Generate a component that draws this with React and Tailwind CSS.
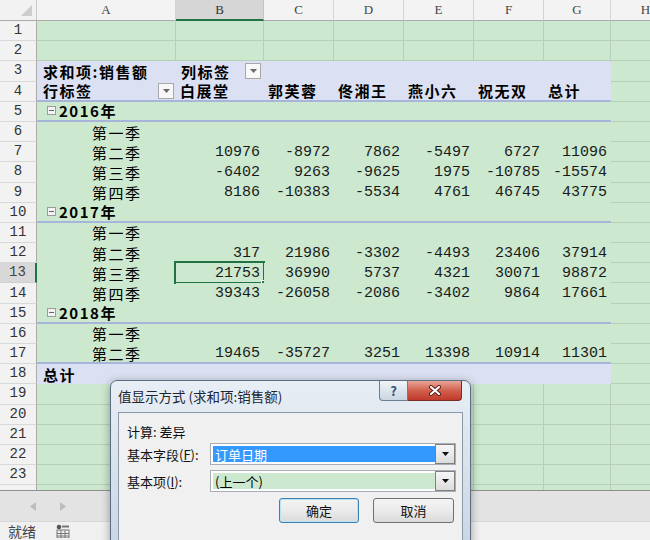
import React from 'react';

const W = ['w-[139px]', 'w-[88px]', 'w-[70px]', 'w-[70px]', 'w-[70px]', 'w-[70px]', 'w-[67px]', 'w-[70px]'];
const LETTERS = ['A', 'B', 'C', 'D', 'E', 'F', 'G', 'H'];
const GRIDCELL = 'shrink-0 h-full border-r border-b border-r-[#b6cfb8] border-b-[#b6cfb8] bg-[#cce8cf]';
const NAMES = ['白展堂', '郭芙蓉', '佟湘王', '燕小六', '祝无双', '总计'];

const rows = [
  { n: 1, kind: 'plain' },
  { n: 2, kind: 'plain' },
  { n: 3, kind: 'hdr3' },
  { n: 4, kind: 'hdr4' },
  { n: 5, kind: 'year', t: '2016年' },
  { n: 6, kind: 'q', t: '第一季' },
  { n: 7, kind: 'q', t: '第二季', v: [10976, -8972, 7862, -5497, 6727, 11096] },
  { n: 8, kind: 'q', t: '第三季', v: [-6402, 9263, -9625, 1975, -10785, -15574] },
  { n: 9, kind: 'q', t: '第四季', v: [8186, -10383, -5534, 4761, 46745, 43775] },
  { n: 10, kind: 'year', t: '2017年' },
  { n: 11, kind: 'q', t: '第一季' },
  { n: 12, kind: 'q', t: '第二季', v: [317, 21986, -3302, -4493, 23406, 37914] },
  { n: 13, kind: 'q', t: '第三季', v: [21753, 36990, 5737, 4321, 30071, 98872] },
  { n: 14, kind: 'q', t: '第四季', v: [39343, -26058, -2086, -3402, 9864, 17661] },
  { n: 15, kind: 'year', t: '2018年' },
  { n: 16, kind: 'q', t: '第一季' },
  { n: 17, kind: 'q', t: '第二季', v: [19465, -35727, 3251, 13398, 10914, 11301], line: true },
  { n: 18, kind: 'total' },
  { n: 19, kind: 'plain' },
  { n: 20, kind: 'plain' },
  { n: 21, kind: 'plain' },
  { n: 22, kind: 'plain' },
  { n: 23, kind: 'plain' },
];

function RowHead({ n, sel }) {
  return (
    <div
      className={
        sel
          ? "w-[37px] shrink-0 h-full flex items-center justify-center bg-[#d8d8d8] border-b border-b-[#cfcfcf] border-r-2 border-r-[#217346] text-[#444] font-['Liberation_Mono',monospace] text-[14px]"
          : "w-[37px] shrink-0 h-full flex items-center justify-center bg-[#f2f2f2] border-b border-b-[#d8d8d8] border-r border-r-[#ababab] text-[#333] font-['Liberation_Mono',monospace] text-[14px]"
      }
    >
      {n}
    </div>
  );
}

function FilterBtn() {
  return (
    <span className="w-[16px] h-[16px] shrink-0 border border-[#a8a8a8] bg-[#f8f8f8] flex items-center justify-center">
      <svg width="7" height="4" viewBox="0 0 7 4">
        <polygon points="0,0 7,0 3.5,4" fill="#6a6a6a" />
      </svg>
    </span>
  );
}

function CollapseBox() {
  return (
    <span className="w-[9px] h-[9px] shrink-0 border border-[#9c9c9c] bg-[#f3f3f3] flex items-center justify-center">
      <span className="w-[5px] h-[1px] bg-[#666]" />
    </span>
  );
}

function PivotRow({ r }) {
  const lav = r.kind === 'hdr3' || r.kind === 'hdr4' || r.kind === 'total';
  const line = r.kind === 'hdr4' || r.kind === 'year' || r.line;
  const base = lav ? 'shrink-0 h-full bg-[#dbe0f2]' : 'shrink-0 h-full bg-[#cce8cf]';
  const lineCls = line ? ' border-b-2 border-b-[#a7b5da]' : '';

  let a;
  if (r.kind === 'hdr3') a = <span className="pl-[6px] font-bold">求和项:销售额</span>;
  else if (r.kind === 'hdr4')
    a = (
      <div className="flex w-full items-center justify-between pl-[6px] pr-[2px]">
        <span className="font-bold">行标签</span>
        <FilterBtn />
      </div>
    );
  else if (r.kind === 'year')
    a = (
      <div className="flex items-center pl-[10px] gap-[3px]">
        <CollapseBox />
        <span className="font-bold">{r.t}</span>
      </div>
    );
  else if (r.kind === 'q') a = <span className="pl-[55px]">{r.t}</span>;
  else a = <span className="pl-[6px] font-bold">总计</span>;

  return (
    <>
      <div className={`${W[0]} ${base}${lineCls} flex items-center text-[15px] tracking-[1.5px] leading-none`}>{a}</div>
      {[0, 1, 2, 3, 4, 5].map((i) => {
        let content = null;
        if (r.kind === 'hdr3' && i === 0)
          content = (
            <div className="flex w-full items-center justify-between pl-[5px] pr-[3px]">
              <span className="font-bold text-[15px] tracking-[1.5px]">列标签</span>
              <FilterBtn />
            </div>
          );
        else if (r.kind === 'hdr4')
          content = <span className="pl-[4px] font-bold text-[15px] tracking-[1.5px]">{NAMES[i]}</span>;
        else if (r.v)
          content = (
            <span className="w-full text-right pr-[4px] font-['Liberation_Mono',monospace] text-[15px] text-[#1a1a1a]">
              {r.v[i]}
            </span>
          );
        const selCell = r.n === 13 && i === 0;
        return (
          <div key={i} className={`${W[i + 1]} ${base}${lineCls} flex items-center leading-none relative`}>
            {content}
            {selCell && (
              <>
                <div className="absolute -left-[2px] -top-[2px] -right-[1px] -bottom-[1px] border-2 border-[#217346]" />
                <div className="absolute -right-[3px] -bottom-[3px] w-[6px] h-[6px] bg-[#217346] border border-white" />
              </>
            )}
          </div>
        );
      })}
      <div className={`${W[7]} ${GRIDCELL}`} />
    </>
  );
}

function SheetRow({ r }) {
  return (
    <div className="flex h-[20.2px] shrink-0">
      <RowHead n={r.n} sel={r.n === 13} />
      {r.kind === 'plain' ? W.map((w, i) => <div key={i} className={`${w} ${GRIDCELL}`} />) : <PivotRow r={r} />}
    </div>
  );
}

function HeaderRow() {
  return (
    <div className="flex h-[21px] shrink-0">
      <div className="w-[37px] shrink-0 h-full bg-[#f2f2f2] border-r border-b border-r-[#c8c8c8] border-b-[#ababab] flex items-end justify-end pr-[4px] pb-[4px]">
        <svg width="11" height="11" viewBox="0 0 11 11">
          <polygon points="11,0 11,11 0,11" fill="#cdcdcd" />
        </svg>
      </div>
      {LETTERS.map((l, i) => (
        <div
          key={l}
          className={
            i === 1
              ? `${W[i]} shrink-0 h-full bg-[#d6d6d6] border-r border-r-[#c4c4c4] border-b-2 border-b-[#217346] flex items-center justify-center font-['Liberation_Serif',serif] text-[13px] text-[#333]`
              : `${W[i]} shrink-0 h-full bg-[#f3f3f3] border-r border-r-[#d4d4d4] border-b border-b-[#ababab] flex items-center justify-center font-['Liberation_Serif',serif] text-[13px] text-[#444]`
          }
        >
          {l}
        </div>
      ))}
    </div>
  );
}

function Combo({ text, selected }) {
  return (
    <div className="flex-1 h-[22px] flex border border-[#a9adb4] bg-white">
      <div
        className={
          selected
            ? 'flex-1 m-[2px] mr-0 bg-[#3399ff] text-white flex items-center pl-[2px] text-[13px] leading-none'
            : 'flex-1 m-[2px] mr-0 bg-[#cce8cf] text-black flex items-center pl-[2px] text-[13px] leading-none'
        }
      >
        {text}
      </div>
      <div className="w-[20px] shrink-0 border border-[#7f7f7f] bg-linear-to-b from-[#f6f6f6] to-[#dcdcdc] flex items-center justify-center">
        <svg width="7" height="4" viewBox="0 0 7 4">
          <polygon points="0,0 7,0 3.5,4" fill="#111" />
        </svg>
      </div>
    </div>
  );
}

function Dialog() {
  return (
    <div className="absolute left-[110px] top-[380px] w-[361px] h-[168px] rounded-t-[7px] border border-[#5d6d80] bg-linear-to-b from-[#e8eef5] via-[#d8e2ed] to-[#c9d6e5] shadow-[0_2px_10px_rgba(0,0,0,0.35)] flex flex-col">
      <div className="flex h-[31px] shrink-0">
        <span className="self-center pl-[7px] text-[13.5px] text-[#1c2530] leading-none">值显示方式 (求和项:销售额)</span>
        <div className="ml-auto mr-[8px] self-start flex">
          <div className="w-[29px] h-[20px] rounded-bl-[4px] border border-t-0 border-[#6b7d92] bg-linear-to-b from-[#f1f5f9] to-[#c9d5e2] flex items-center justify-center text-[13px] font-bold text-[#3a5372] leading-none">
            ?
          </div>
          <div className="w-[54px] h-[20px] rounded-br-[4px] border border-t-0 border-l-0 border-[#7a2b22] bg-linear-to-b from-[#e8a596] via-[#d1604f] to-[#c0392b] flex items-center justify-center">
            <svg width="14" height="11" viewBox="0 0 14 11">
              <path d="M3 2 L11 9 M11 2 L3 9" stroke="#5a1a12" strokeWidth="4" strokeLinecap="round" />
              <path d="M3 2 L11 9 M11 2 L3 9" stroke="#ffffff" strokeWidth="2.2" strokeLinecap="round" />
            </svg>
          </div>
        </div>
      </div>
      <div className="mx-[7px] flex-1 border border-[#8b99ab] bg-[#f0f0f0] pt-[10px] pl-[8px] pr-[6px] text-[13px] text-[#111]">
        <div className="h-[18px] leading-[18px]">计算: 差异</div>
        <div className="mt-[2px] flex items-center h-[22px]">
          <span className="w-[83px] shrink-0 leading-none">
            基本字段(<span className="underline">F</span>):
          </span>
          <Combo text="订单日期" selected />
        </div>
        <div className="mt-[5px] flex items-center h-[22px]">
          <span className="w-[83px] shrink-0 leading-none">
            基本项(<span className="underline">I</span>):
          </span>
          <Combo text="(上一个)" />
        </div>
        <div className="mt-[6px] flex justify-end gap-[14px] pr-[2px]">
          <div className="w-[80px] h-[25px] rounded-[3px] border border-[#3c7fb1] shadow-[inset_0_0_0_1px_#b9e2f7] bg-linear-to-b from-[#f3f3f3] via-[#ebebeb] to-[#d9d9d9] flex items-center justify-center leading-none">
            确定
          </div>
          <div className="w-[81px] h-[25px] rounded-[3px] border border-[#707070] bg-linear-to-b from-[#f3f3f3] via-[#ebebeb] to-[#d9d9d9] flex items-center justify-center leading-none">
            取消
          </div>
        </div>
      </div>
    </div>
  );
}

export default function App() {
  return (
    <div className="relative w-[650px] h-[540px] overflow-hidden bg-[#f0f0f0] font-['Noto_Sans_CJK_SC',sans-serif] text-black flex flex-col">
      <div className="flex flex-col shrink-0">
        <HeaderRow />
        {rows.map((r) => (
          <SheetRow key={r.n} r={r} />
        ))}
        <div className="flex h-[5px] shrink-0 overflow-hidden">
          <div className="w-[37px] shrink-0 h-full bg-[#f2f2f2] border-r border-r-[#ababab]" />
          {W.map((w, i) => (
            <div key={i} className={`${w} shrink-0 h-full border-r border-r-[#b6cfb8] bg-[#cce8cf]`} />
          ))}
        </div>
      </div>
      <div className="h-[31px] shrink-0 border-t border-[#8f8f8f] bg-[#e3e3e3] flex items-center pl-[30px] gap-[24px]">
        <svg width="6" height="9" viewBox="0 0 6 9">
          <polygon points="6,0 6,9 0,4.5" fill="#bdbdbd" />
        </svg>
        <svg width="6" height="9" viewBox="0 0 6 9">
          <polygon points="0,0 0,9 6,4.5" fill="#bdbdbd" />
        </svg>
      </div>
      <div className="flex-1 bg-[#f0f0f0] border-t border-[#d8d8d8] flex items-center pl-[8px] gap-[20px]">
        <span className="text-[14px] text-[#444] leading-none">就绪</span>
        <svg width="14" height="14" viewBox="0 0 14 14">
          <circle cx="3" cy="3" r="2.3" fill="#555" />
          <rect x="6" y="1.5" width="7" height="2" fill="#777" />
          <rect x="1" y="6" width="12" height="8" fill="none" stroke="#777" strokeWidth="1" />
          <path d="M1 9.5 H13 M1 12 H13 M5 6 V14 M9 6 V14" stroke="#777" strokeWidth="1" />
        </svg>
      </div>
      <Dialog />
    </div>
  );
}
